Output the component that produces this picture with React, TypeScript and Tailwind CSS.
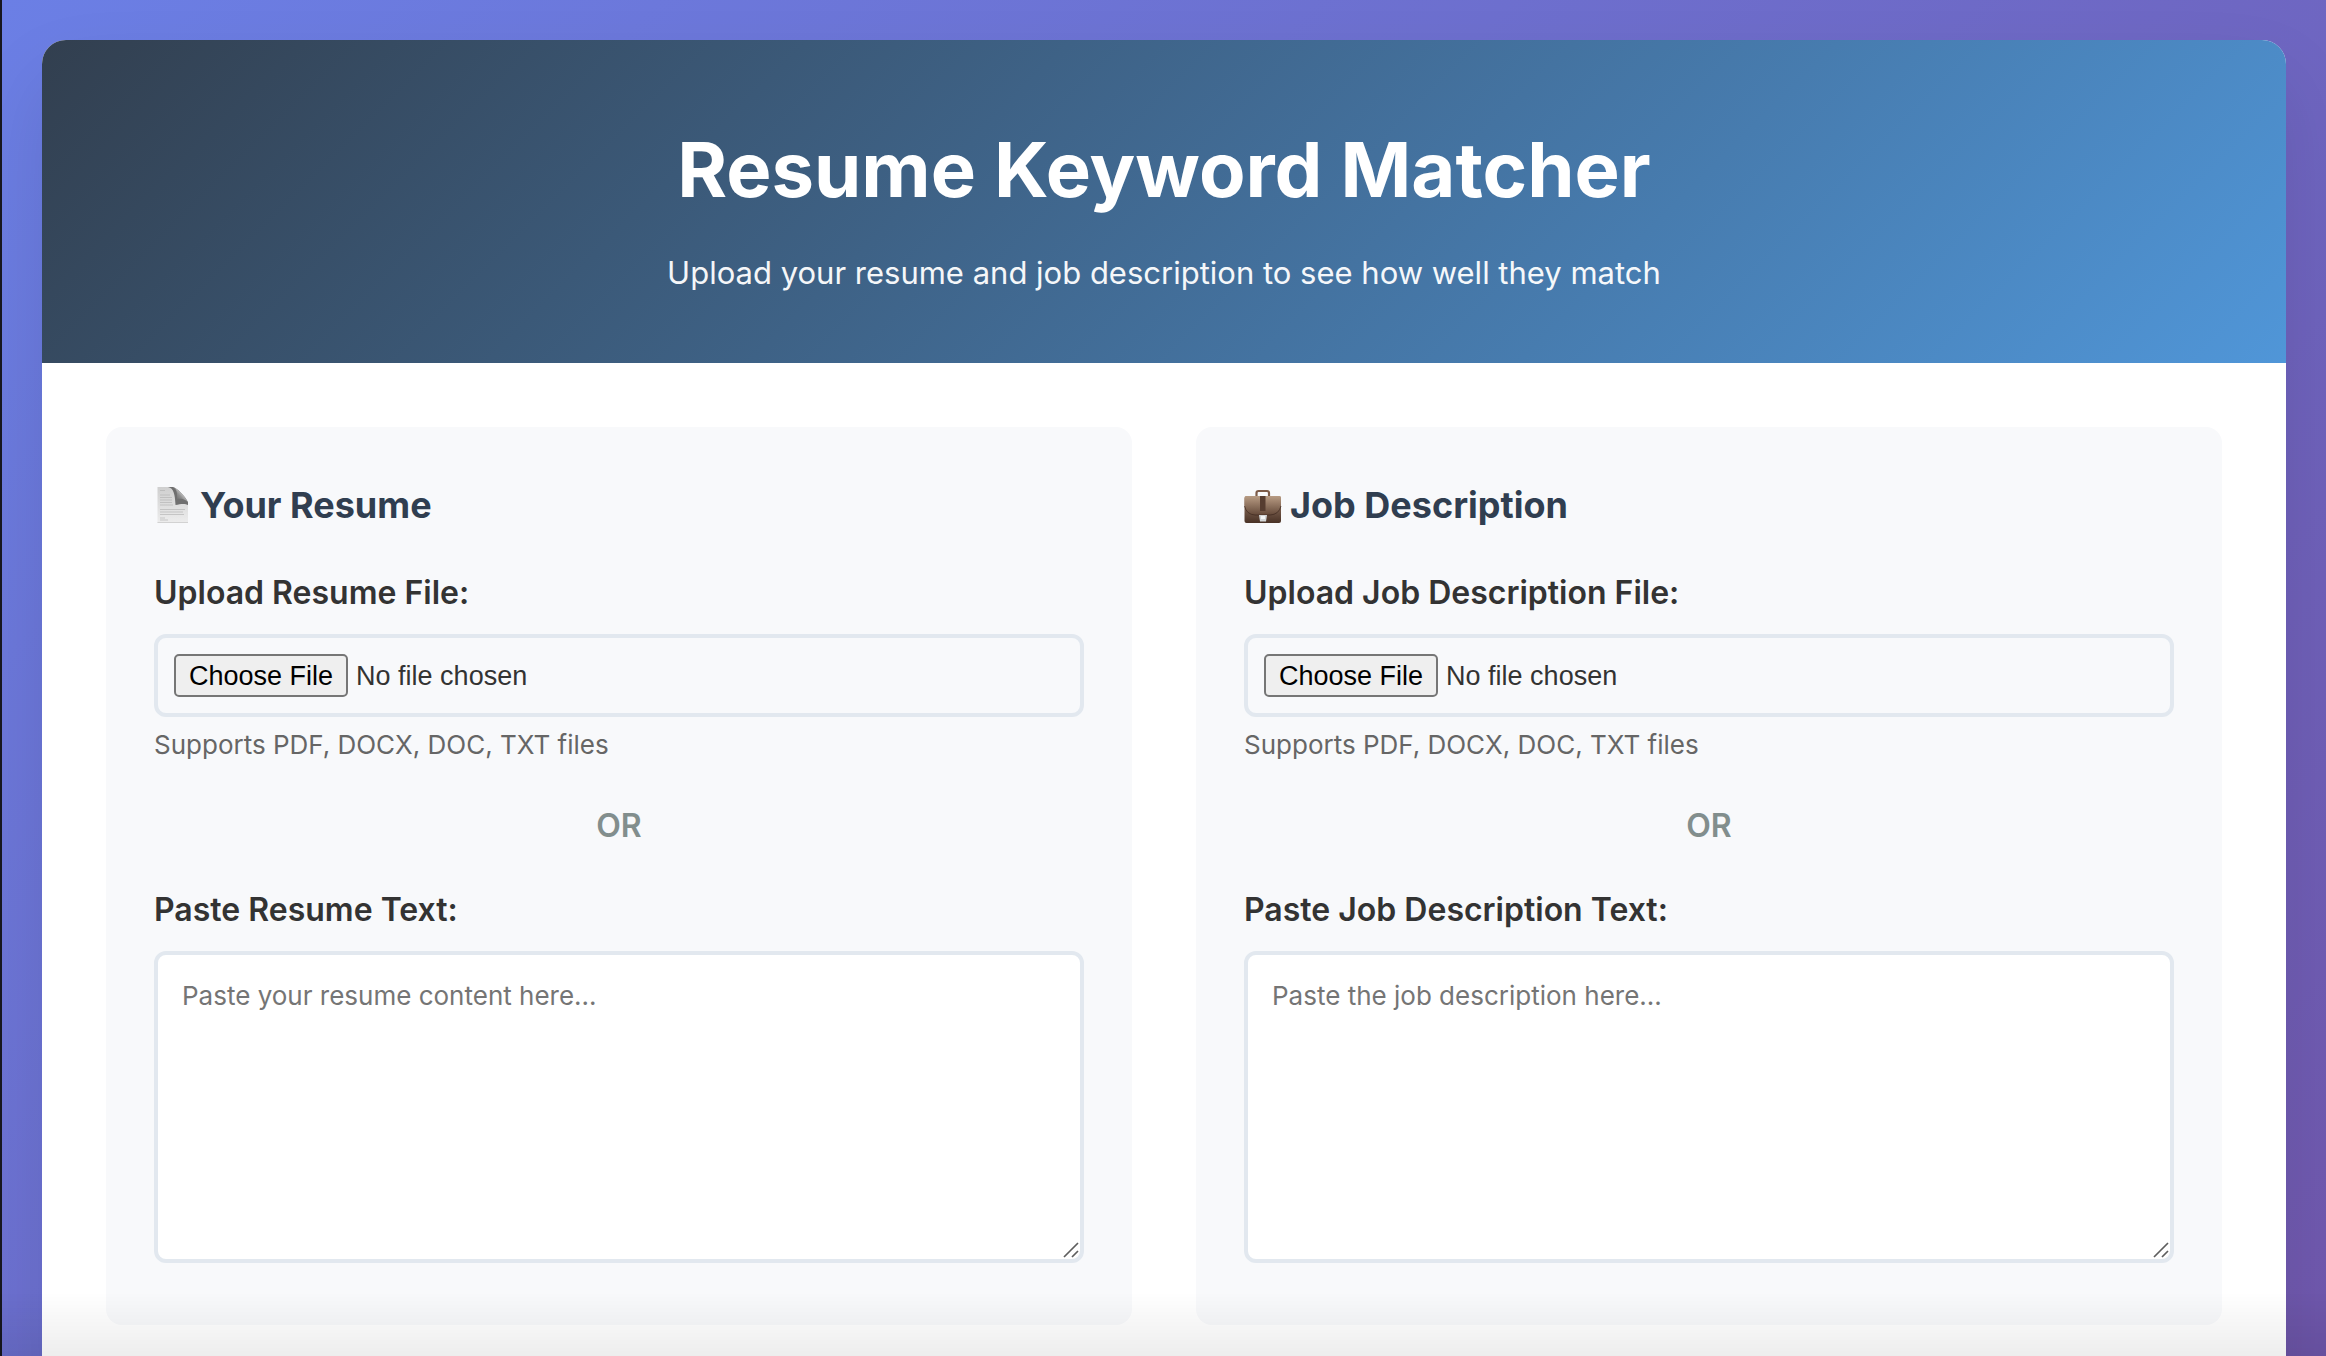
import { useId } from 'react';

interface SourcePanelProps {
  icon: React.ReactNode;
  title: string;
  fileLabel: string;
  textLabel: string;
  placeholder: string;
}

function DocumentIcon() {
  return (
    <svg width="38" height="38" viewBox="0 0 38 38" aria-hidden="true">
      <defs>
        <linearGradient id="paper" x1="0" y1="0" x2="0" y2="1">
          <stop offset="0" stopColor="#cfcfcf" />
          <stop offset="1" stopColor="#ededed" />
        </linearGradient>
        <linearGradient id="fold" x1="0" y1="1" x2="1" y2="0">
          <stop offset="0" stopColor="#4d4d4d" />
          <stop offset="0.45" stopColor="#8f8f8f" />
          <stop offset="0.75" stopColor="#f0f0f0" />
        </linearGradient>
      </defs>
      <path d="M3.5 1H19C23 2 32 11 34 17V37H3.5Z" fill="url(#paper)" />
      <path d="M14 1C20 2 21 9 21.5 19C27 17.500 32 17.500 34 19V16C31 10 23 2 19 1Z" fill="#555" opacity="0.8" />
      <path d="M19 1C23 3 23.500 8 23 13C28 12 33 14 34 17C32 11 24 3 19 1Z" fill="url(#fold)" />
      <path d="M6 4.500H11M6 9H16M6 11.500H18M6 14H18M6 16.500H18M6 19H19M6 23.500H31M6 26H29M6 28.500H30M6 32H11M6 34H14" stroke="#b0b0b0" strokeWidth="1" opacity="0.6" />
      <path d="M3.500 36.500H34" stroke="#d2d2d2" strokeWidth="1" />
    </svg>
  );
}

function BriefcaseIcon() {
  return (
    <svg width="38" height="38" viewBox="0 0 38 38" aria-hidden="true">
      <defs>
        <linearGradient id="leather" x1="0" y1="0" x2="0" y2="1">
          <stop offset="0" stopColor="#b0937b" />
          <stop offset="0.4" stopColor="#7d6150" />
          <stop offset="1" stopColor="#493226" />
        </linearGradient>
        <linearGradient id="flap" x1="0" y1="0" x2="0" y2="1">
          <stop offset="0" stopColor="#b89c84" />
          <stop offset="1" stopColor="#644939" />
        </linearGradient>
      </defs>
      <path d="M12.500 10V7Q12.500 5 14.500 5H23Q25 5 25 7V10" fill="none" stroke="#7c5b48" strokeWidth="2.200" />
      <rect x="0.500" y="10" width="36.500" height="27" rx="2" fill="url(#leather)" />
      <path d="M0.500 12Q0.500 10 2.500 10H35Q37 10 37 12V19Q35 28 26 29H11Q2 28 0.500 19Z" fill="url(#flap)" />
      <path d="M0.500 20Q2.500 28.500 11 29H26Q35 28.500 37 20" fill="none" stroke="#3f2a20" strokeWidth="1" opacity="0.7" />
      <rect x="16" y="10" width="5.500" height="15" fill="#563d30" />
      <path d="M15 29H23L22 35.500H16Z" fill="#d4d7d8" />
      <path d="M17 30H21V33H17Z" fill="#f4f6f6" />
    </svg>
  );
}

function SourcePanel({ icon, title, fileLabel, textLabel, placeholder }: SourcePanelProps) {
  const fileId = useId();
  const textId = useId();

  return (
    <section className="min-w-0 flex-1 rounded-2xl bg-[#f8f9fb] px-12 pt-12 pb-[62px]">
      <h2 className="mb-9 flex items-center gap-2 text-[36px] leading-[60px] font-bold text-[#303e50]">
        {icon}
        {title}
      </h2>

      <label htmlFor={fileId} className="mb-5 block text-[32px] leading-[43px] font-semibold">
        {fileLabel}
      </label>
      <input
        id={fileId}
        type="file"
        className="block h-[83px] w-full rounded-xl border-4 border-[#e2e8ef] p-4 font-['Liberation_Sans',sans-serif] text-[27px] file:mr-2 file:h-[43px] file:rounded-[5px] file:border-2 file:border-solid file:border-[#767676] file:bg-[#efefef] file:px-[13px] file:text-black"
      />
      <p className="mt-2 text-[26px] leading-[39px] text-[#666]">Supports PDF, DOCX, DOC, TXT files</p>

      <div className="my-10 text-center text-[32px] leading-[44px] font-semibold text-[#828e8d]">OR</div>

      <label htmlFor={textId} className="mb-5 block text-[32px] leading-[43px] font-semibold">
        {textLabel}
      </label>
      <div className="relative">
        <textarea
          id={textId}
          placeholder={placeholder}
          className="block h-[312px] w-full resize-none rounded-xl border-4 border-[#e2e8ef] bg-white p-6 text-[26px] leading-[34px] placeholder:text-[#757575]"
        />
        <svg className="pointer-events-none absolute right-[5px] bottom-[5px]" width="16" height="16" viewBox="0 0 16 16" aria-hidden="true">
          <path d="M1 15L15 1M9 15L15 9" stroke="#5e5e5e" strokeWidth="1.700" />
        </svg>
      </div>
    </section>
  );
}

export default function App() {
  return (
    <div className="relative flex min-h-screen flex-col overflow-hidden border-l-2 border-[#17171f] bg-[linear-gradient(135deg,#6b7fe5_0%,#7150a2_100%)] bg-[length:100%_150%] px-10 pt-10 font-[Inter,sans-serif] text-[#333]">
      <main className="flex-1 rounded-t-3xl bg-white shadow-[0_40px_80px_rgba(0,0,0,0.1)]">
        <header className="rounded-t-3xl bg-[linear-gradient(135deg,#323f4f_0%,#5096d8_100%)] px-10 pt-20 pb-16 text-center text-white">
          <h1 className="mb-7 text-[76px] leading-[99px] font-bold">Resume Keyword Matcher</h1>
          <p className="text-[31px] leading-[52px] opacity-95">Upload your resume and job description to see how well they match</p>
        </header>

        <div className="flex gap-16 p-16">
          <SourcePanel
            icon={<DocumentIcon />}
            title="Your Resume"
            fileLabel="Upload Resume File:"
            textLabel="Paste Resume Text:"
            placeholder="Paste your resume content here..."
          />
          <SourcePanel
            icon={<BriefcaseIcon />}
            title="Job Description"
            fileLabel="Upload Job Description File:"
            textLabel="Paste Job Description Text:"
            placeholder="Paste the job description here..."
          />
        </div>
      </main>

      {/* Soft shade along the bottom edge of the window */}
      <div className="pointer-events-none fixed inset-x-0 bottom-0 h-16 bg-linear-to-t from-black/7 to-transparent" />
    </div>
  );
}
